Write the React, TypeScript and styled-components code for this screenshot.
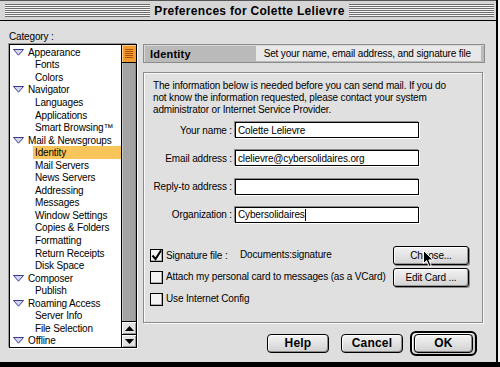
import React from 'react'
import styled, { createGlobalStyle } from 'styled-components'

const ui = `"Liberation Sans", Arial, sans-serif`

const GlobalStyle = createGlobalStyle`
  body {
    margin: 0;
    background: #fff;
  }
  * {
    box-sizing: border-box;
  }
`

interface TreeItem {
  label: string
  parent?: boolean
  selected?: boolean
}

const tree: TreeItem[] = [
  { label: 'Appearance', parent: true },
  { label: 'Fonts' },
  { label: 'Colors' },
  { label: 'Navigator', parent: true },
  { label: 'Languages' },
  { label: 'Applications' },
  { label: 'Smart Browsing™' },
  { label: 'Mail & Newsgroups', parent: true },
  { label: 'Identity', selected: true },
  { label: 'Mail Servers' },
  { label: 'News Servers' },
  { label: 'Addressing' },
  { label: 'Messages' },
  { label: 'Window Settings' },
  { label: 'Copies & Folders' },
  { label: 'Formatting' },
  { label: 'Return Receipts' },
  { label: 'Disk Space' },
  { label: 'Composer', parent: true },
  { label: 'Publish' },
  { label: 'Roaming Access', parent: true },
  { label: 'Server Info' },
  { label: 'File Selection' },
  { label: 'Offline', parent: true },
]

const fields = [
  { label: 'Your name :', value: 'Colette Lelievre' },
  { label: 'Email address :', value: 'clelievre@cybersolidaires.org' },
  { label: 'Reply-to address :', value: '' },
  { label: 'Organization :', value: 'Cybersolidaires', caret: true },
]

const Disclosure = () => (
  <svg width="11" height="7" viewBox="0 0 11 7">
    <polygon points="0.5,0.5 10.5,0.5 5.5,6.2" fill="#d4d4f4" stroke="#3a3a8c" strokeWidth="1" />
  </svg>
)

const Arrow = ({ up }: { up?: boolean }) => (
  <svg width="9" height="5" viewBox="0 0 9 5">
    <polygon points={up ? '4.5,0 9,5 0,5' : '0,0 9,0 4.5,5'} fill="#000" />
  </svg>
)

const Check = () => (
  <svg width="11" height="11" viewBox="0 0 11 11">
    <path d="M1.5 5.5 L4.5 9 L10 0.5" fill="none" stroke="#000" strokeWidth="2" />
  </svg>
)

const Pointer = () => (
  <svg width="12" height="18" viewBox="0 0 12 18">
    <path d="M0.5 0.5 L0.5 13.5 L3.6 10.6 L6 16.5 L8.2 15.6 L5.8 9.9 L10 9.9 Z" fill="#000" stroke="#fff" strokeWidth="1" />
  </svg>
)

export default function App() {
  return (
    <Screen>
      <GlobalStyle />
      <Window>
        <TitleBar>
          <Stripes />
          <Title>Preferences for Colette Lelievre</Title>
          <Stripes />
        </TitleBar>
        <Body>
          <LeftCol>
            <SmallText>Category :</SmallText>
            <ListBox>
              <TreeArea>
                {tree.map((item) => (
                  <TreeRow key={item.label} $parent={item.parent} $selected={item.selected}>
                    {item.parent && <Disclosure />}
                    <span>{item.label}</span>
                  </TreeRow>
                ))}
              </TreeArea>
              <ScrollBar>
                <Thumb>
                  {[0, 1, 2, 3, 4].map((i) => (
                    <Ridge key={i} />
                  ))}
                </Thumb>
                <Track />
                <ScrollArrow>
                  <Arrow up />
                </ScrollArrow>
                <ScrollArrow>
                  <Arrow />
                </ScrollArrow>
              </ScrollBar>
            </ListBox>
          </LeftCol>
          <RightCol>
            <Header>
              <HeaderTitle>Identity</HeaderTitle>
              <HeaderDesc>Set your name, email address, and signature file</HeaderDesc>
            </Header>
            <GroupBox>
              <Intro>
                The information below is needed before you can send mail. If you do
                <br />
                not know the information requested, please contact your system
                <br />
                administrator or Internet Service Provider.
              </Intro>
              <Form>
                {fields.map((f) => (
                  <React.Fragment key={f.label}>
                    <FieldLabel>{f.label}</FieldLabel>
                    <Field>
                      {f.value}
                      {f.caret && <Caret />}
                    </Field>
                  </React.Fragment>
                ))}
              </Form>
              <Options>
                <OptionRow>
                  <CheckBox>
                    <Check />
                  </CheckBox>
                  <SigLabel>Signature file :</SigLabel>
                  <SmallText>Documents:signature</SmallText>
                  <PushButton>Choose...</PushButton>
                </OptionRow>
                <OptionRow>
                  <CheckBox />
                  <SmallText>Attach my personal card to messages (as a VCard)</SmallText>
                  <PushButton>Edit Card ...</PushButton>
                </OptionRow>
                <OptionRow>
                  <CheckBox />
                  <SmallText>Use Internet Config</SmallText>
                </OptionRow>
              </Options>
            </GroupBox>
            <ButtonRow>
              <BigButton>Help</BigButton>
              <BigButton>Cancel</BigButton>
              <DefaultRing>
                <BigButton $inner>OK</BigButton>
              </DefaultRing>
            </ButtonRow>
          </RightCol>
        </Body>
      </Window>
      <BottomEdge />
      <Cursor>
        <Pointer />
      </Cursor>
    </Screen>
  )
}

const Screen = styled.div`
  position: relative;
  width: 500px;
  height: 367px;
  overflow: hidden;
  background: #f2f2f2;
  font-family: ${ui};
  letter-spacing: -0.15px;
  color: #000;
`

const Window = styled.div`
  width: 498px;
  height: 362px;
  background: #dedede;
  border-right: 2px solid #000;
  display: flex;
  flex-direction: column;
`

const BottomEdge = styled.div`
  height: 5px;
  background: #000;
`

const TitleBar = styled.div`
  height: 21px;
  display: flex;
  align-items: center;
  gap: 4px;
  padding: 0 2px 0 5px;
  background: #d6d6d6;
  border-top: 1px solid #555;
  border-bottom: 1px solid #000;
`

const Stripes = styled.div`
  flex: 1;
  height: 13px;
  background: repeating-linear-gradient(to bottom, #6e6e6e 0 1px, #f6f6f6 1px 2px);
`

const Title = styled.div`
  font-weight: bold;
  font-size: 12px;
  letter-spacing: 0.3px;
  line-height: 14px;
`

const Body = styled.div`
  flex: 1;
  display: flex;
  gap: 6px;
  padding: 10px 0 0 9px;
`

const LeftCol = styled.div`
  width: 128px;
  display: flex;
  flex-direction: column;
`

const SmallText = styled.span`
  font-size: 10px;
  line-height: 12px;
  white-space: nowrap;
`

const ListBox = styled.div`
  margin-top: 1px;
  height: 304px;
  display: flex;
  background: #fff;
  border: 1px solid #000;
  box-shadow: 1px 1px 0 #fff, -1px -1px 0 #999;
`

const TreeArea = styled.div`
  flex: 1;
  padding-top: 1px;
  display: flex;
  flex-direction: column;
`

const TreeRow = styled.div<{ $parent?: boolean; $selected?: boolean }>`
  height: 12.57px;
  display: flex;
  align-items: center;
  gap: 4px;
  font-size: 10px;
  white-space: nowrap;
  margin-left: ${(p) => (p.$parent ? '3px' : '23px')};
  padding-left: ${(p) => (p.$parent ? '0' : '2px')};
  background: ${(p) => (p.$selected ? '#f8c55a' : 'transparent')};
`

const ScrollBar = styled.div`
  width: 15px;
  display: flex;
  flex-direction: column;
  border-left: 1px solid #000;
  background: #a4a4a4;
`

const Thumb = styled.div`
  height: 18px;
  display: flex;
  flex-direction: column;
  justify-content: center;
  gap: 1px;
  padding: 0 3px;
  background: #f39a2c;
  border-bottom: 1px solid #000;
  box-shadow: inset 1px 1px 0 #fcd08a;
`

const Ridge = styled.div`
  height: 1px;
  background: #a84e0a;
`

const Track = styled.div`
  flex: 1;
  box-shadow: inset 1px 0 0 #c8c8c8, inset -1px 0 0 #888;
`

const ScrollArrow = styled.div`
  height: 13px;
  display: flex;
  align-items: center;
  justify-content: center;
  background: #e2e2e2;
  border-top: 1px solid #000;
  box-shadow: inset 1px 1px 0 #fff, inset -1px -1px 0 #999;
`

const RightCol = styled.div`
  width: 342px;
  display: flex;
  flex-direction: column;
  padding-top: 13px;
`

const Header = styled.div`
  height: 19px;
  display: flex;
  align-items: center;
  padding: 0 3px 0 6px;
  background: #bababa;
  border: 1px solid #8c8c8c;
  box-shadow: inset 1px 1px 0 #d8d8d8;
`

const HeaderTitle = styled.span`
  font-weight: bold;
  font-size: 11px;
  letter-spacing: 0.2px;
`

const HeaderDesc = styled.span`
  margin-left: auto;
  height: 15px;
  display: flex;
  align-items: center;
  padding: 0 10px 0 8px;
  background: #e8e8e8;
  font-size: 10px;
  white-space: nowrap;
`

const GroupBox = styled.div`
  margin-top: 9px;
  height: 251px;
  width: 340px;
  padding: 7px 13px 0 9px;
  background: #e0e0e0;
  border: 1px solid #8a8a8a;
  box-shadow: inset 1px 1px 0 #fafafa, 1px 1px 0 #fafafa;
`

const Intro = styled.p`
  margin: 0;
  font-size: 10px;
  line-height: 12px;
  white-space: nowrap;
`

const Form = styled.div`
  margin-top: 6px;
  display: grid;
  grid-template-columns: 79px 184px;
  column-gap: 3px;
  row-gap: 12.3px;
`

const FieldLabel = styled.span`
  font-size: 10px;
  text-align: right;
  align-self: center;
  white-space: nowrap;
`

const Field = styled.div`
  height: 16px;
  display: flex;
  align-items: center;
  padding-left: 2px;
  font-size: 10px;
  background: #fff;
  border: 1px solid #000;
  box-shadow: -1px -1px 0 #8c8c8c, 1px 1px 0 #fff;
`

const Caret = styled.span`
  width: 1px;
  height: 12px;
  background: #000;
`

const Options = styled.div`
  margin: 23px 0 0 -3px;
  display: flex;
  flex-direction: column;
  gap: 3px;
`

const OptionRow = styled.div`
  height: 19px;
  display: flex;
  align-items: center;
`

const CheckBox = styled.div`
  width: 13px;
  height: 13px;
  margin-right: 3px;
  display: flex;
  align-items: center;
  justify-content: center;
  background: #f4f4f4;
  border: 1px solid #000;
  box-shadow: inset -1px -1px 0 #aaa;
`

const SigLabel = styled.span`
  width: 74px;
  font-size: 10px;
`

const PushButton = styled.div`
  margin-left: auto;
  width: 76px;
  height: 19px;
  display: flex;
  align-items: center;
  justify-content: center;
  font-size: 10px;
  background: linear-gradient(#f2f2f2, #d4d4d4);
  border: 1px solid #000;
  border-radius: 3px;
  box-shadow: inset 1px 1px 0 #fff, inset -1px -1px 0 #999, 1px 1px 0 #888;
`

const ButtonRow = styled.div`
  margin-top: 8px;
  height: 24px;
  display: flex;
  align-items: center;
  justify-content: flex-end;
  gap: 12px;
  padding-right: 8px;
`

const BigButton = styled.div<{ $inner?: boolean }>`
  width: ${(p) => (p.$inner ? '59px' : '62px')};
  height: 19px;
  display: flex;
  align-items: center;
  justify-content: center;
  font-weight: bold;
  font-size: 12px;
  letter-spacing: 0.2px;
  background: linear-gradient(#f4f4f4, #d0d0d0);
  border: 1px solid #000;
  border-radius: 4px;
  box-shadow: inset 1px 1px 0 #fff, inset -1px -1px 0 #8a8a8a;
`

const DefaultRing = styled.div`
  margin-left: -5px;
  width: 67px;
  height: 25px;
  display: flex;
  align-items: center;
  justify-content: center;
  border: 2px solid #000;
  border-radius: 6px;
  background: #cfcfcf;
  box-shadow: inset 1px 1px 0 #fff;
`

const Cursor = styled.div`
  position: absolute;
  left: 423px;
  top: 250px;
  display: flex;
`
